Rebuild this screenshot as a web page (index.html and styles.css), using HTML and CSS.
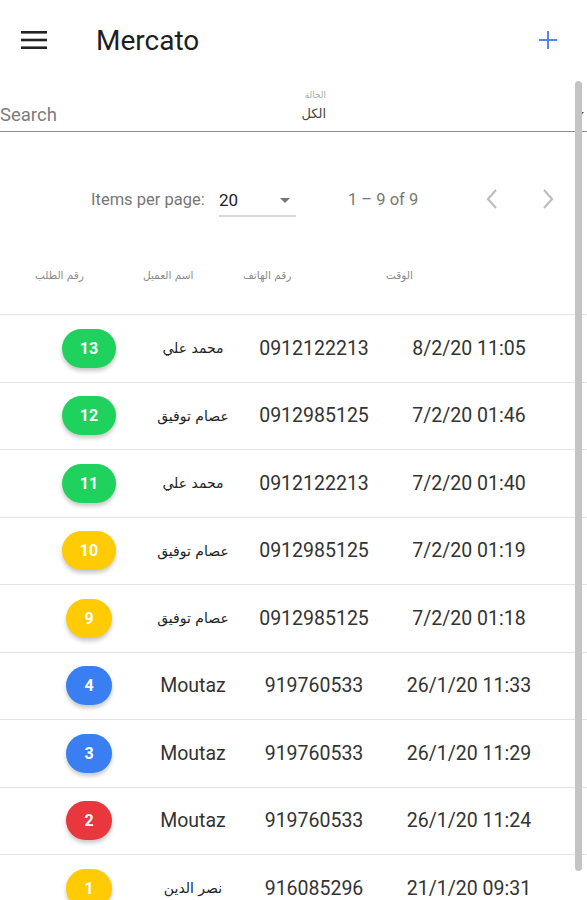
FILE: index.html
```html
<!DOCTYPE html>
<html>
<head>
  <title>Mercato - Orders</title>
  <link rel="stylesheet" href="styles.css">
</head>
<body>
  <div class="toolbar">
    <svg class="menu-icon" width="26" height="20" viewBox="0 0 26 20">
      <rect x="0" y="1" width="26" height="2.6" fill="#222"/>
      <rect x="0" y="8.7" width="26" height="2.6" fill="#222"/>
      <rect x="0" y="16.4" width="26" height="2.6" fill="#222"/>
    </svg>
    <span class="title">Mercato</span>
    <svg class="add-icon" width="18" height="18" viewBox="0 0 18 18">
      <rect x="8" y="0" width="2" height="18" fill="#4d87f0"/>
      <rect x="0" y="8" width="18" height="2" fill="#4d87f0"/>
    </svg>
  </div>

  <div class="filters">
    <span class="search">Search</span>
    <div class="status">
      <span class="status-label">الحالة</span>
      <span class="status-value">الكل</span>
    </div>
    <span class="filter-arrow"></span>
  </div>

  <div class="paginator">
    <span class="pag-label">Items per page:</span>
    <div class="pag-select">
      <span>20</span>
      <span class="select-arrow"></span>
    </div>
    <span class="pag-range">1 – 9 of 9</span>
    <svg class="chev" width="14" height="22" viewBox="0 0 14 22">
      <path d="M11 2 L3 11 L11 20" fill="none" stroke="#bdbdbd" stroke-width="2.2"/>
    </svg>
    <svg class="chev next" width="14" height="22" viewBox="0 0 14 22">
      <path d="M3 2 L11 11 L3 20" fill="none" stroke="#bdbdbd" stroke-width="2.2"/>
    </svg>
  </div>

  <div class="table-head">
    <span>رقم الطلب</span>
    <span>اسم العميل</span>
    <span>رقم الهاتف</span>
    <span>الوقت</span>
  </div>

  <div class="rows">
    <div class="row">
      <span class="cell"><span class="badge green">13</span></span>
      <span class="cell ar">محمد علي</span>
      <span class="cell">0912122213</span>
      <span class="cell">8/2/20 11:05</span>
    </div>
    <div class="row">
      <span class="cell"><span class="badge green">12</span></span>
      <span class="cell ar">عصام توفيق</span>
      <span class="cell">0912985125</span>
      <span class="cell">7/2/20 01:46</span>
    </div>
    <div class="row">
      <span class="cell"><span class="badge green">11</span></span>
      <span class="cell ar">محمد علي</span>
      <span class="cell">0912122213</span>
      <span class="cell">7/2/20 01:40</span>
    </div>
    <div class="row">
      <span class="cell"><span class="badge yellow">10</span></span>
      <span class="cell ar">عصام توفيق</span>
      <span class="cell">0912985125</span>
      <span class="cell">7/2/20 01:19</span>
    </div>
    <div class="row">
      <span class="cell"><span class="badge yellow">9</span></span>
      <span class="cell ar">عصام توفيق</span>
      <span class="cell">0912985125</span>
      <span class="cell">7/2/20 01:18</span>
    </div>
    <div class="row">
      <span class="cell"><span class="badge blue">4</span></span>
      <span class="cell">Moutaz</span>
      <span class="cell">919760533</span>
      <span class="cell">26/1/20 11:33</span>
    </div>
    <div class="row">
      <span class="cell"><span class="badge blue">3</span></span>
      <span class="cell">Moutaz</span>
      <span class="cell">919760533</span>
      <span class="cell">26/1/20 11:29</span>
    </div>
    <div class="row">
      <span class="cell"><span class="badge red">2</span></span>
      <span class="cell">Moutaz</span>
      <span class="cell">919760533</span>
      <span class="cell">26/1/20 11:24</span>
    </div>
    <div class="row">
      <span class="cell"><span class="badge yellow">1</span></span>
      <span class="cell ar">نصر الدين</span>
      <span class="cell">916085296</span>
      <span class="cell">21/1/20 09:31</span>
    </div>
  </div>

  <div class="scroll-thumb"></div>
</body>
</html>
```

FILE: styles.css
```css
body {
  margin: 0;
  padding: 0;
  background: #ffffff;
  font-family: Roboto, 'Noto Sans', sans-serif;
  color: #333333;
  overflow: hidden;
  height: 900px;
  position: relative;
}

.toolbar {
  height: 80px;
  display: flex;
  align-items: center;
  padding: 0 30px 0 21px;
}

.title {
  font-size: 28px;
  color: #1e1e1e;
  margin-left: 49px;
  flex: 1;
}

.filters {
  height: 51px;
  display: flex;
  align-items: flex-end;
  border-bottom: 1px solid #8c8c8c;
  position: relative;
}

.search {
  font-size: 18.5px;
  color: #7c7c7c;
  width: 291px;
  margin-bottom: 5px;
}

.status {
  display: flex;
  flex-direction: column;
  align-items: flex-end;
  width: 35px;
  margin-bottom: 10px;
  font-family: 'DejaVu Sans', sans-serif;
}

.status-label {
  font-size: 9px;
  color: #aaaaaa;
  margin-bottom: 6px;
}

.status-value {
  font-size: 13px;
  color: #444444;
}

.filter-arrow {
  position: absolute;
  right: 3px;
  bottom: 14px;
  border-left: 4px solid transparent;
  border-right: 4px solid transparent;
  border-top: 5px solid #555555;
}

.paginator {
  display: flex;
  align-items: center;
  height: 66px;
  margin-top: 34px;
  padding-left: 91px;
  color: #777777;
  font-size: 16.5px;
}

.pag-label {
  width: 116px;
  white-space: nowrap;
  margin-right: 12px;
}

.pag-select {
  width: 77px;
  height: 32px;
  display: flex;
  align-items: center;
  justify-content: space-between;
  border-bottom: 2px solid #d6d6d6;
  color: #222222;
  font-size: 17px;
  box-sizing: border-box;
  margin-top: 4px;
  padding-right: 6px;
}

.select-arrow {
  border-left: 5px solid transparent;
  border-right: 5px solid transparent;
  border-top: 5px solid #757575;
}

.pag-range {
  margin-left: 52px;
  width: 137px;
}

.chev.next {
  margin-left: 42px;
}

.table-head {
  display: grid;
  grid-template-columns: 108px 100px 143px 1fr;
  padding: 3px 0 0 35px;
  height: 79px;
  align-items: center;
  font-family: 'DejaVu Sans', sans-serif;
  font-size: 10.5px;
  color: #8a8a8a;
  border-bottom: 1px solid #e3e3e3;
}

.row {
  display: grid;
  grid-template-columns: 98px 110px 132px 178px;
  padding-left: 40px;
  height: 66.5px;
  align-items: center;
  border-bottom: 1px solid #e3e3e3;
  font-size: 19.5px;
}

.cell {
  text-align: center;
}

.cell.ar {
  font-family: 'DejaVu Serif', 'DejaVu Sans', serif;
  font-size: 14px;
  color: #222222;
}

.badge {
  display: inline-block;
  min-width: 44px;
  height: 39px;
  line-height: 39px;
  padding: 0 18px;
  box-sizing: border-box;
  border-radius: 20px;
  color: #ffffff;
  font-weight: bold;
  font-size: 16px;
  box-shadow: 0 3px 4px rgba(0, 0, 0, 0.22);
}

.badge.green { background: #1fd25d; }
.badge.yellow { background: #ffcb05; }
.badge.blue { background: #3a7ff2; }
.badge.red { background: #e8373d; }

.scroll-thumb {
  position: absolute;
  left: 575px;
  top: 81px;
  width: 7px;
  height: 790px;
  border-radius: 4px;
  background: #c4c4c4;
}
```
